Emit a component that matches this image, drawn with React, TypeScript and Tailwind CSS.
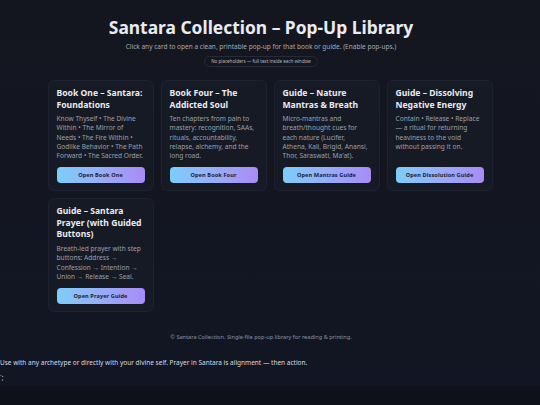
import React from "react";

type Item = { title: string; body: string; button: string };

const items: Item[] = [
  {
    title: "Book One – Santara: Foundations",
    body: "Know Thyself • The Divine Within • The Mirror of Needs • The Fire Within • Godlike Behavior • The Path Forward • The Sacred Order.",
    button: "Open Book One",
  },
  {
    title: "Book Four – The Addicted Soul",
    body: "Ten chapters from pain to mastery: recognition, SAAs, rituals, accountability, relapse, alchemy, and the long road.",
    button: "Open Book Four",
  },
  {
    title: "Guide – Nature Mantras & Breath",
    body: "Micro-mantras and breath/thought cues for each nature (Lucifer, Athena, Kali, Brigid, Anansi, Thor, Saraswati, Ma'at).",
    button: "Open Mantras Guide",
  },
  {
    title: "Guide – Dissolving Negative Energy",
    body: "Contain • Release • Replace — a ritual for returning heaviness to the void without passing it on.",
    button: "Open Dissolution Guide",
  },
  {
    title: "Guide – Santara Prayer (with Guided Buttons)",
    body: "Breath-led prayer with step buttons: Address → Confession → Intention → Union → Release → Seal.",
    button: "Open Prayer Guide",
  },
];

function Card({ item }: { item: Item }) {
  return (
    <div className="flex flex-col rounded-[6px] border border-[#1e2230] bg-[#161a25] px-[8px] pt-[7px] pb-[7px]">
      <h2 className="text-[8.6px] font-bold leading-[11.5px] text-[#e8eaf0]">{item.title}</h2>
      <p className="mt-[3px] mb-[7px] text-[6.6px] leading-[9.3px] text-[#9aa0ad]">{item.body}</p>
      <button className="mt-auto h-[16px] w-full rounded-[4px] bg-gradient-to-r from-[#7ccdfa] to-[#a78bf6] text-[5.6px] font-bold tracking-[0.1px] text-[#1b2233]">
        {item.button}
      </button>
    </div>
  );
}

export default function App() {
  return (
    <div className="min-h-screen bg-[#0e1119]" style={{ fontFamily: '"Noto Sans", "Open Sans", sans-serif' }}>
      <div className="bg-gradient-to-b from-[#14161f] to-[#121624] pb-[3px]">
        <header className="flex flex-col items-center pt-[15px] pr-[18px]">
          <h1 className="text-[17.4px] font-bold leading-[24px] text-[#e9ebf1]">Santara Collection – Pop-Up Library</h1>
          <p className="mt-[3px] text-[6.5px] leading-[10px] text-[#a4a9b5]">
            Click any card to open a clean, printable pop-up for that book or guide. (Enable pop-ups.)
          </p>
          <span className="mt-[4px] rounded-full border border-[#262b3a] px-[6px] text-[4.5px] leading-[9px] text-[#b4b8c2]">
            No placeholders — full text inside each window
          </span>
        </header>
        <main className="mx-auto mt-[13px] grid w-[445px] grid-cols-4 gap-[7px]">
          {items.map((it) => (
            <Card key={it.title} item={it} />
          ))}
        </main>
        <footer className="mt-[20px] pr-[18px] text-center text-[5.6px] leading-[10px] text-[#8e93a0]">
          © Santara Collection. Single-file pop-up library for reading &amp; printing.
        </footer>
        <p className="mt-[16px] text-[6.5px] leading-[10px] text-[#d6d9e0]">
          Use with any archetype or directly with your divine self. Prayer in Santara is alignment — then action.
        </p>
        <p className="mt-[5px] text-[6.5px] leading-[10px] text-[#d6d9e0]">`;</p>
      </div>
    </div>
  );
}
